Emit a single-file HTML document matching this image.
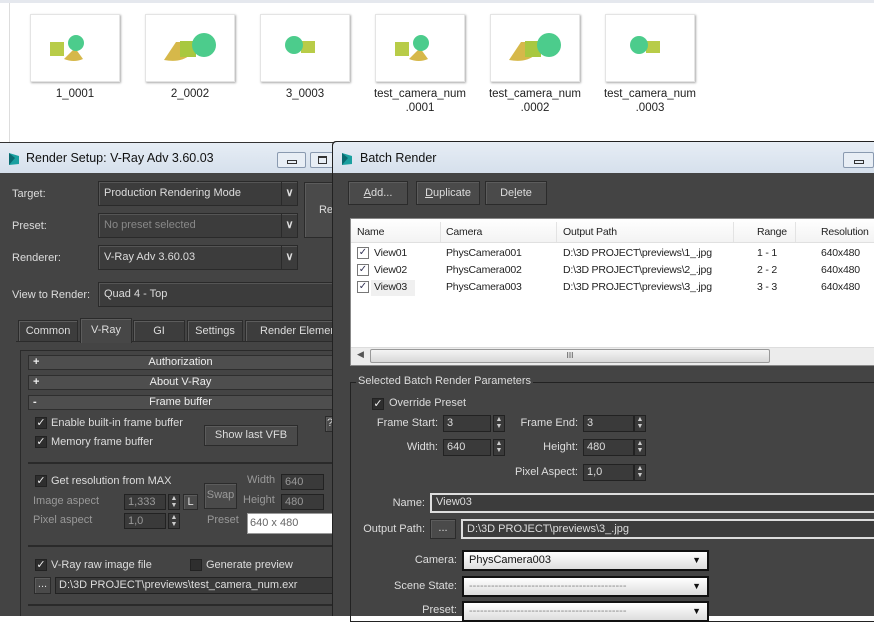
<!DOCTYPE html>
<html><head><meta charset="utf-8"><style>
*{box-sizing:border-box;margin:0;padding:0}
body{width:874px;height:616px;overflow:hidden;background:#fff;font-family:"Liberation Sans",sans-serif;font-size:11px;position:relative}
.a{position:absolute}
.lbl{position:absolute;color:#ddd;white-space:nowrap}
.r{position:absolute;color:#ddd;white-space:nowrap;text-align:right;width:140px}
.dd{position:absolute;background:#3c3c3c;border:1px solid #2a2a2a;box-shadow:inset 1px 1px 0 #555;color:#ddd;padding:5px 5px;white-space:nowrap}
.dd .ar{position:absolute;right:0;top:0;bottom:0;width:16px;border-left:1px solid #2a2a2a;color:#ddd;font-size:11px;font-weight:bold;text-align:center;line-height:22px}
.btn{position:absolute;background:#4a4a4a;border:1px solid #2b2b2b;box-shadow:inset 1px 1px 0 #5c5c5c;color:#ddd;text-align:center;white-space:nowrap}
.cb{position:absolute;width:12px;height:12px;background:#2e2e2e;border:1px solid #222;color:#eee;font-size:11px;line-height:10px;text-align:center}
.inp{position:absolute;background:#3a3a3a;border:1px solid #222;color:#ccc;padding:1px 3px;font-size:11px}
.sp{position:absolute;width:12px;background:#3a3a3a;border:1px solid #222;color:#ccc;font-size:7px;line-height:7px;text-align:center}
.thumb{position:absolute;width:90px;height:68px;background:#fff;box-shadow:1px 1px 2px #aaa;border:1px solid #e4e4e4}
.tl{position:absolute;width:120px;text-align:center;color:#222;font-size:11.5px;line-height:14px}
.roll{position:absolute;left:28px;width:305px;height:15px;background:#4e4e4e;border:1px solid #2e2e2e;color:#eee;text-align:center;line-height:13px}
.roll b{position:absolute;left:4px;font-weight:bold}
.wdd{position:absolute;background:linear-gradient(#fff,#ddd);border:2px solid #111;color:#111;padding:2px 5px;font-size:11px}
.wdd i{position:absolute;right:6px;top:3px;font-style:normal;font-size:9px}
.tb{position:absolute;color:#222;line-height:17px;font-size:10.5px;letter-spacing:-0.2px}
</style></head><body>
<div class="a" style="left:9px;top:0;width:1px;height:142px;background:#ddd"></div>
<div class="a" style="left:0;top:0;width:874px;height:3px;background:#e5e8ee"></div>
<div class="thumb" style="left:30px;top:14px"><svg width="90" height="68"><rect x="19" y="27" width="14" height="14" fill="#b8cc48"/><path d="M33 44 L44 33 L52 44 Q43 48 33 44Z" fill="#d6b84a"/><circle cx="45" cy="28" r="8" fill="#4ccc8c"/></svg></div>
<div class="thumb" style="left:145px;top:14px"><svg width="90" height="68"><path d="M18 45 L30 27 L44 27 L44 40 Q35 48 18 45Z" fill="#d6b84a"/><rect x="34" y="26" width="16" height="16" fill="#a8c840"/><circle cx="58" cy="30" r="12" fill="#4ccc8c"/></svg></div>
<div class="thumb" style="left:260px;top:14px"><svg width="90" height="68"><rect x="40" y="26" width="14" height="12" fill="#b8cc48"/><circle cx="33" cy="30" r="9" fill="#4ccc8c"/></svg></div>
<div class="thumb" style="left:375px;top:14px"><svg width="90" height="68"><rect x="19" y="27" width="14" height="14" fill="#b8cc48"/><path d="M33 44 L44 33 L52 44 Q43 48 33 44Z" fill="#d6b84a"/><circle cx="45" cy="28" r="8" fill="#4ccc8c"/></svg></div>
<div class="thumb" style="left:490px;top:14px"><svg width="90" height="68"><path d="M18 45 L30 27 L44 27 L44 40 Q35 48 18 45Z" fill="#d6b84a"/><rect x="34" y="26" width="16" height="16" fill="#a8c840"/><circle cx="58" cy="30" r="12" fill="#4ccc8c"/></svg></div>
<div class="thumb" style="left:605px;top:14px"><svg width="90" height="68"><rect x="40" y="26" width="14" height="12" fill="#b8cc48"/><circle cx="33" cy="30" r="9" fill="#4ccc8c"/></svg></div>
<div class="tl" style="left:15px;top:87px">1_0001</div>
<div class="tl" style="left:130px;top:87px">2_0002</div>
<div class="tl" style="left:245px;top:87px">3_0003</div>
<div class="tl" style="left:360px;top:87px">test_camera_num<br>.0001</div>
<div class="tl" style="left:475px;top:87px">test_camera_num<br>.0002</div>
<div class="tl" style="left:590px;top:87px">test_camera_num<br>.0003</div>

<div class="a" style="left:0;top:142px;width:334px;height:474px;background:#444;border-top:1px solid #333"></div>
<div class="a" style="left:0;top:143px;width:334px;height:30px;background:linear-gradient(#e6edf5,#d6e0ec)"></div>
<svg class="a" style="left:7px;top:152px" width="14" height="14"><path d="M2 1 L12 4 L12 12 L2 13 Z" fill="#1aa0a0"/><path d="M2 1 L8 6 L2 13Z" fill="#0a6a70"/></svg>
<div class="a" style="left:26px;top:151px;color:#111;font-size:12.5px">Render Setup: V-Ray Adv 3.60.03</div>
<div class="a" style="left:277px;top:152px;width:29px;height:16px;border:1px solid #8a9ab0;border-radius:2px;background:#e8eef5"><div class="a" style="left:9px;top:7px;width:10px;height:4px;border:1px solid #333"></div></div>
<div class="a" style="left:310px;top:152px;width:24px;height:16px;border:1px solid #8a9ab0;border-radius:2px;background:#e8eef5"><div class="a" style="left:7px;top:3px;width:9px;height:8px;border:1px solid #333;border-top-width:2px"></div></div>
<div class="lbl" style="left:12px;top:188px">Target:</div>
<div class="lbl" style="left:12px;top:220px">Preset:</div>
<div class="lbl" style="left:12px;top:252px">Renderer:</div>
<div class="lbl" style="left:12px;top:289px">View to Render:</div>
<div class="dd" style="left:98px;top:181px;width:200px;height:25px">Production Rendering Mode<span class="ar">&#8744;</span></div>
<div class="dd" style="left:98px;top:213px;width:200px;height:25px;color:#888">No preset selected<span class="ar">&#8744;</span></div>
<div class="dd" style="left:98px;top:245px;width:200px;height:25px">V-Ray Adv 3.60.03<span class="ar">&#8744;</span></div>
<div class="dd" style="left:98px;top:282px;width:240px;height:25px">Quad 4 - Top</div>
<div class="btn" style="left:304px;top:182px;width:32px;height:56px;line-height:54px;text-align:right;padding-right:2px">Re</div>
<div class="a" style="left:16px;top:341px;width:318px;height:1px;background:#2a2a2a"></div>
<div class="btn" style="left:18px;top:320px;width:60px;height:22px;line-height:20px;background:#3d3d3d">Common</div>
<div class="btn" style="left:80px;top:318px;width:52px;height:25px;line-height:22px;background:#474747;border-bottom:none">V-Ray</div>
<div class="btn" style="left:133px;top:320px;width:52px;height:22px;line-height:20px;background:#3d3d3d">GI</div>
<div class="btn" style="left:187px;top:320px;width:56px;height:22px;line-height:20px;background:#3d3d3d">Settings</div>
<div class="btn" style="left:245px;top:320px;width:95px;height:22px;line-height:20px;background:#3d3d3d;text-align:left;padding-left:14px">Render Elemen</div>
<div class="a" style="left:20px;top:350px;width:314px;height:266px;border-left:1px solid #2a2a2a;border-top:1px solid #2a2a2a"></div>
<div class="roll" style="top:355px"><b>+</b>Authorization</div>
<div class="roll" style="top:375px"><b>+</b>About V-Ray</div>
<div class="roll" style="top:395px"><b>-</b>Frame buffer</div>
<div class="cb" style="left:35px;top:417px">&#10003;</div><div class="lbl" style="left:51px;top:417px">Enable built-in frame buffer</div>
<div class="cb" style="left:35px;top:436px">&#10003;</div><div class="lbl" style="left:51px;top:436px">Memory frame buffer</div>
<div class="btn" style="left:204px;top:425px;width:94px;height:21px;line-height:19px">Show last VFB</div>
<div class="btn" style="left:325px;top:416px;width:10px;height:16px">?</div>
<div class="a" style="left:28px;top:462px;width:306px;height:2px;background:#2a2a2a"></div>
<div class="cb" style="left:35px;top:475px">&#10003;</div><div class="lbl" style="left:51px;top:475px">Get resolution from MAX</div>
<div class="lbl" style="left:33px;top:495px;color:#999">Image aspect</div>
<div class="lbl" style="left:33px;top:514px;color:#999">Pixel aspect</div>
<div class="inp" style="left:124px;top:494px;width:42px;height:16px;color:#999">1,333</div><div class="sp" style="left:168px;top:494px;height:16px">▲<br>▼</div>
<div class="btn" style="left:183px;top:494px;width:15px;height:16px;line-height:14px">L</div>
<div class="inp" style="left:124px;top:513px;width:42px;height:16px;color:#999">1,0</div><div class="sp" style="left:168px;top:513px;height:16px">▲<br>▼</div>
<div class="btn" style="left:204px;top:483px;width:33px;height:26px;line-height:22px;color:#999">Swap</div>
<div class="lbl" style="left:247px;top:474px;color:#999">Width</div>
<div class="lbl" style="left:243px;top:494px;color:#999">Height</div>
<div class="lbl" style="left:207px;top:514px;color:#999">Preset</div>
<div class="inp" style="left:281px;top:474px;width:43px;height:16px;color:#999">640</div>
<div class="inp" style="left:281px;top:494px;width:43px;height:16px;color:#999">480</div>
<div class="a" style="left:247px;top:513px;width:87px;height:21px;background:#fff;border:1px solid #999;color:#666;padding:3px 2px">640 x 480</div>
<div class="a" style="left:28px;top:545px;width:306px;height:2px;background:#2a2a2a"></div>
<div class="cb" style="left:35px;top:559px">&#10003;</div><div class="lbl" style="left:51px;top:559px">V-Ray raw image file</div>
<div class="cb" style="left:190px;top:559px"></div><div class="lbl" style="left:206px;top:559px">Generate preview</div>
<div class="btn" style="left:34px;top:577px;width:17px;height:17px;line-height:13px">...</div>
<div class="inp" style="left:55px;top:577px;width:279px;height:17px;color:#ddd">D:\3D PROJECT\previews\test_camera_num.exr</div>
<div class="a" style="left:28px;top:604px;width:306px;height:2px;background:#2a2a2a"></div>

<div class="a" style="left:332px;top:141px;width:542px;height:475px;background:#444;border:1px solid #222;border-right:none;border-bottom:none;border-radius:4px 0 0 0"></div>
<div class="a" style="left:333px;top:142px;width:541px;height:31px;background:linear-gradient(#e6edf5,#d6e0ec);border-radius:4px 0 0 0"></div>
<svg class="a" style="left:340px;top:152px" width="14" height="14"><path d="M2 1 L12 4 L12 12 L2 13 Z" fill="#1aa0a0"/><path d="M2 1 L8 6 L2 13Z" fill="#0a6a70"/></svg>
<div class="a" style="left:360px;top:151px;color:#111;font-size:12.5px">Batch Render</div>
<div class="a" style="left:843px;top:152px;width:31px;height:16px;border:1px solid #8a9ab0;border-radius:2px;background:#e8eef5"><div class="a" style="left:10px;top:7px;width:10px;height:4px;border:1px solid #333"></div></div>
<div class="btn" style="left:348px;top:181px;width:60px;height:24px;line-height:22px"><u>A</u>dd...</div>
<div class="btn" style="left:416px;top:181px;width:64px;height:24px;line-height:22px"><u>D</u>uplicate</div>
<div class="btn" style="left:485px;top:181px;width:62px;height:24px;line-height:22px">De<u>l</u>ete</div>
<div class="a" style="left:350px;top:218px;width:524px;height:148px;background:#fff;border:1px solid #888;border-right:none"></div>
<div class="a" style="left:351px;top:219px;width:523px;height:24px;background:linear-gradient(#fff,#f3f3f3);border-bottom:1px solid #e0e0e0"></div>
<div class="a" style="left:440px;top:222px;width:1px;height:20px;background:#e3e3e3"></div>
<div class="a" style="left:556px;top:222px;width:1px;height:20px;background:#e3e3e3"></div>
<div class="a" style="left:733px;top:222px;width:1px;height:20px;background:#e3e3e3"></div>
<div class="a" style="left:795px;top:222px;width:1px;height:20px;background:#e3e3e3"></div>
<div class="tb" style="left:357px;top:224px">Name</div>
<div class="tb" style="left:446px;top:224px">Camera</div>
<div class="tb" style="left:563px;top:224px">Output Path</div>
<div class="tb" style="left:757px;top:224px">Range</div>
<div class="tb" style="left:821px;top:224px">Resolution</div>
<div class="a" style="left:371px;top:280px;width:44px;height:16px;background:#f0f0f0"></div>
<div class="a" style="left:357px;top:247px;width:12px;height:12px;border:1px solid #777;font-size:10px;line-height:10px;text-align:center;color:#335">&#10003;</div>
<div class="a" style="left:357px;top:264px;width:12px;height:12px;border:1px solid #777;font-size:10px;line-height:10px;text-align:center;color:#335">&#10003;</div>
<div class="a" style="left:357px;top:281px;width:12px;height:12px;border:1px solid #777;font-size:10px;line-height:10px;text-align:center;color:#335">&#10003;</div>
<div class="tb" style="left:374px;top:245px">View01<br>View02<br>View03</div>
<div class="tb" style="left:446px;top:245px">PhysCamera001<br>PhysCamera002<br>PhysCamera003</div>
<div class="tb" style="left:563px;top:245px">D:\3D PROJECT\previews\1_.jpg<br>D:\3D PROJECT\previews\2_.jpg<br>D:\3D PROJECT\previews\3_.jpg</div>
<div class="tb" style="left:757px;top:245px">1 - 1<br>2 - 2<br>3 - 3</div>
<div class="tb" style="left:821px;top:245px">640x480<br>640x480<br>640x480</div>
<div class="a" style="left:351px;top:347px;width:523px;height:18px;background:#ececec;border-top:1px solid #ddd"></div>
<div class="a" style="left:357px;top:349px;color:#555;font-size:9px">&#9664;</div>
<div class="a" style="left:370px;top:349px;width:400px;height:14px;background:linear-gradient(#f4f4f4,#d8d8d8);border:1px solid #999;border-radius:2px;text-align:center;font-size:8px;line-height:12px;color:#444">III</div>
<div class="a" style="left:350px;top:382px;width:524px;height:240px;border:1px solid #222;border-right:none"></div>
<div class="lbl" style="left:356px;top:375px;background:#444;padding:0 2px">Selected Batch Render Parameters</div>
<div class="cb" style="left:372px;top:398px">&#10003;</div><div class="lbl" style="left:389px;top:397px">Override Preset</div>
<div class="r" style="left:298px;top:417px">Frame Start:</div>
<div class="inp" style="left:443px;top:415px;width:48px;height:17px;color:#ddd">3</div><div class="sp" style="left:493px;top:415px;height:17px">▲<br>▼</div>
<div class="r" style="left:438px;top:417px">Frame End:</div>
<div class="inp" style="left:583px;top:415px;width:51px;height:17px;color:#ddd">3</div><div class="sp" style="left:634px;top:415px;height:17px">▲<br>▼</div>
<div class="r" style="left:298px;top:441px">Width:</div>
<div class="inp" style="left:443px;top:439px;width:48px;height:17px;color:#ddd">640</div><div class="sp" style="left:493px;top:439px;height:17px">▲<br>▼</div>
<div class="r" style="left:438px;top:441px">Height:</div>
<div class="inp" style="left:583px;top:439px;width:51px;height:17px;color:#ddd">480</div><div class="sp" style="left:634px;top:439px;height:17px">▲<br>▼</div>
<div class="r" style="left:438px;top:466px">Pixel Aspect:</div>
<div class="inp" style="left:583px;top:464px;width:51px;height:17px;color:#ddd">1,0</div><div class="sp" style="left:634px;top:464px;height:17px">▲<br>▼</div>
<div class="r" style="left:285px;top:497px">Name:</div>
<div class="a" style="left:430px;top:493px;width:444px;height:20px;background:#3c3c3c;border:2px solid #ddd;border-right:none;color:#ddd;padding:1px 4px">View03</div>
<div class="r" style="left:285px;top:523px">Output Path:</div>
<div class="btn" style="left:430px;top:519px;width:26px;height:20px;line-height:16px">...</div>
<div class="a" style="left:461px;top:519px;width:413px;height:20px;background:#3c3c3c;border:2px solid #ddd;border-right:none;color:#ddd;padding:2px 4px">D:\3D PROJECT\previews\3_.jpg</div>
<div class="r" style="left:317px;top:554px">Camera:</div>
<div class="wdd" style="left:462px;top:550px;width:247px;height:21px">PhysCamera003<i>&#9660;</i></div>
<div class="r" style="left:317px;top:580px">Scene State:</div>
<div class="wdd" style="left:462px;top:576px;width:247px;height:21px;color:#888">-------------------------------------------<i style="color:#111">&#9660;</i></div>
<div class="r" style="left:317px;top:604px">Preset:</div>
<div class="wdd" style="left:462px;top:601px;width:247px;height:21px;color:#888">-------------------------------------------<i style="color:#111">&#9660;</i></div>
</body></html>
